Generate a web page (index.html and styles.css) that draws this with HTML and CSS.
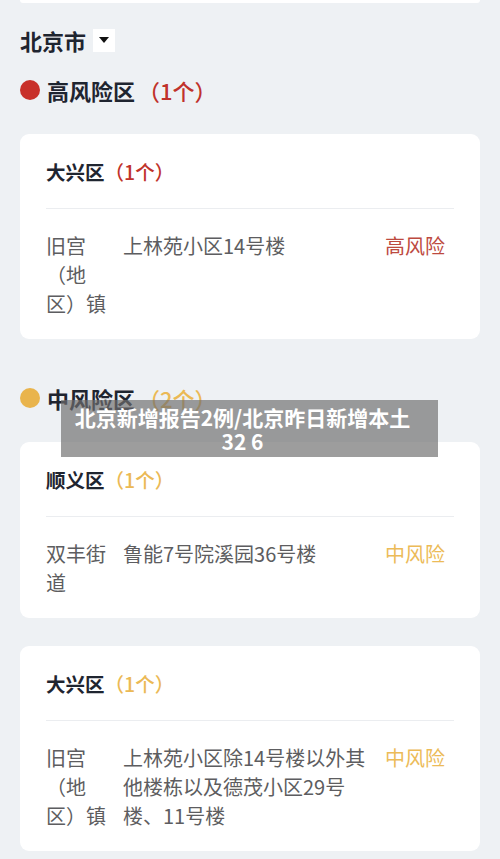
FILE: index.html
```html
<!DOCTYPE html>
<html lang="zh-CN">
<head>
    <meta charset="UTF-8">
    <meta name="viewport" content="width=device-width, initial-scale=1.0">
    <title>北京风险区</title>
    <link rel="stylesheet" href="styles.css">
</head>
<body>

<div class="page">
    <div class="top-card"></div>

    <!-- City selector -->
    <div class="city">
        <span>北京市</span>
        <span class="drop"><i class="tri"></i></span>
    </div>

    <!-- High risk -->
    <div class="risk-head">
        <span class="dot red"></span>
        <span class="risk-name">高风险区</span>
        <span class="count red-text">（1个）</span>
    </div>

    <div class="card">
        <div class="card-title">大兴区<span class="red-text">（1个）</span></div>
        <div class="row">
            <div class="town">旧宫（地区）镇</div>
            <div class="place">上林苑小区14号楼</div>
            <div class="level high">高风险</div>
        </div>
    </div>

    <!-- Medium risk -->
    <div class="risk-head mid-head">
        <span class="dot yellow"></span>
        <span class="risk-name">中风险区</span>
        <span class="count yellow-text">（2个）</span>
    </div>

    <div class="card">
        <div class="card-title">顺义区<span class="yellow-text">（1个）</span></div>
        <div class="row">
            <div class="town">双丰街道</div>
            <div class="place">鲁能7号院溪园36号楼</div>
            <div class="level mid">中风险</div>
        </div>
    </div>

    <div class="card">
        <div class="card-title">大兴区<span class="yellow-text">（1个）</span></div>
        <div class="row">
            <div class="town">旧宫（地区）镇</div>
            <div class="place">上林苑小区除14号楼以外其他楼栋以及德茂小区29号楼、11号楼</div>
            <div class="level mid">中风险</div>
        </div>
    </div>
</div>

<div class="banner">北京新增报告2例/北京昨日新增本土<br>32 6</div>

</body>
</html>
```

FILE: styles.css
```css
body {
    margin: 0;
    background-color: #eef1f4;
    font-family: "Noto Sans CJK SC", "Noto Sans", sans-serif;
    color: #1f2530;
}
.page {
    padding: 0 20px;
}
.top-card {
    height: 3px;
    background-color: #fff;
    border-radius: 0 0 4px 4px;
}

/* city selector */
.city {
    display: flex;
    align-items: center;
    gap: 7px;
    margin-top: 21px;
    height: 32px;
    font-size: 22px;
    font-weight: 600;
}
.drop {
    width: 22px;
    height: 23px;
    background-color: #fff;
    display: flex;
    align-items: center;
    justify-content: center;
}
.tri {
    width: 0;
    height: 0;
    border-left: 5px solid transparent;
    border-right: 5px solid transparent;
    border-top: 6px solid #111;
}

/* risk headers */
.risk-head {
    display: flex;
    align-items: center;
    margin-top: 18px;
    height: 32px;
    font-size: 22px;
}
.mid-head {
    margin-top: 43px;
}
.dot {
    width: 20px;
    height: 20px;
    border-radius: 50%;
    margin-right: 7px;
}
.dot.red {
    background-color: #c8302a;
}
.dot.yellow {
    background-color: #e9b44c;
}
.risk-name {
    font-weight: 700;
}
.count {
    font-weight: 500;
    margin-left: 3px;
}
.red-text {
    color: #c0322b;
}
.yellow-text {
    color: #ebb955;
}

/* cards */
.card {
    background-color: #fff;
    border-radius: 9px;
    margin-top: 28px;
    padding: 24px 35px 21px 26px;
}
.card-title {
    font-size: 19.5px;
    font-weight: 700;
    line-height: 28px;
    padding-bottom: 22px;
    border-bottom: 1px solid #ebedf0;
    margin-right: -9px;
}
.card-title span {
    font-weight: 500;
}
.row {
    display: grid;
    grid-template-columns: 60px 1fr 60px;
    gap: 17px;
    padding-top: 22px;
    font-size: 20px;
    line-height: 29px;
    color: #5d5d60;
}
.level.high {
    color: #bd4a3f;
}
.level.mid {
    color: #ecbb58;
}

/* overlay banner */
.banner {
    position: absolute;
    left: 61px;
    top: 400px;
    width: 377px;
    height: 57px;
    box-sizing: border-box;
    padding: 5px 14px 0 0;
    background-color: rgba(110, 110, 110, 0.68);
    color: #fff;
    font-size: 21px;
    font-weight: 700;
    line-height: 24px;
    text-align: center;
}
```
